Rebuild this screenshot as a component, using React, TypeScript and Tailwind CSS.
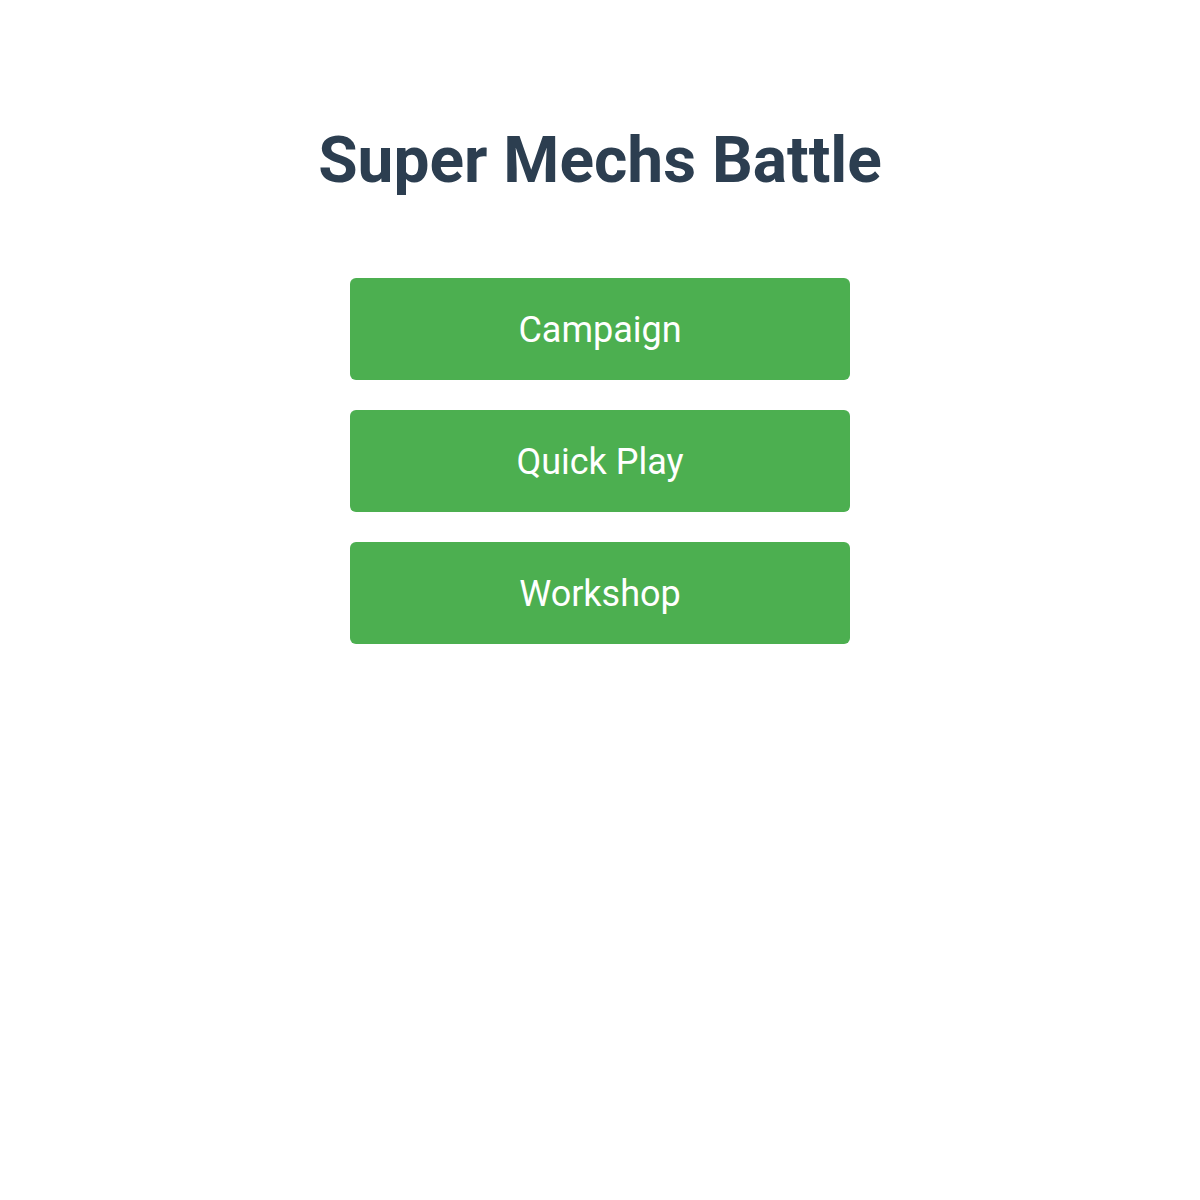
const MENU_ITEMS = ['Campaign', 'Quick Play', 'Workshop'];

export default function App() {
  return (
    <div className="min-h-[1200px] bg-white flex flex-col items-center pt-[117px] font-['Roboto','Liberation_Sans',sans-serif]">
      <h1 className="text-[64px] leading-[88px] font-bold text-[#2c3e50]">Super Mechs Battle</h1>
      <div className="mt-[73px] flex flex-col gap-[30px]">
        {MENU_ITEMS.map(label => (
          <button
            key={label}
            className="w-[500px] h-[102px] pt-[2px] rounded-[6px] bg-[#4caf50] text-white text-[36px] cursor-pointer"
          >
            {label}
          </button>
        ))}
      </div>
    </div>
  );
}
